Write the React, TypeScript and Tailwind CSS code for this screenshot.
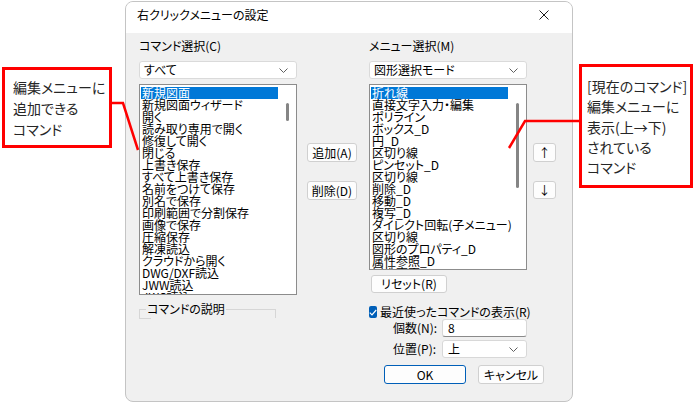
import React from "react";

const leftItems = [
  "新規図面",
  "新規図面ウィザード",
  "開く",
  "読み取り専用で開く",
  "修復して開く",
  "閉じる",
  "上書き保存",
  "すべて上書き保存",
  "名前をつけて保存",
  "別名で保存",
  "印刷範囲で分割保存",
  "画像で保存",
  "圧縮保存",
  "解凍読込",
  "クラウドから開く",
  "DWG/DXF読込",
  "JWW読込",
  "JWC読込",
];

const rightItems = [
  "折れ線",
  "直接文字入力・編集",
  "ポリライン",
  "ボックス_D",
  "円_D",
  "区切り線",
  "ピンセット_D",
  "区切り線",
  "削除_D",
  "移動_D",
  "複写_D",
  "ダイレクト回転(子メニュー)",
  "区切り線",
  "図形のプロパティ_D",
  "属性参照_D",
  "属性変更_D",
];

function Chevron() {
  return (
    <svg width="9" height="5" viewBox="0 0 9 5" fill="none">
      <path d="M0.5 0.5 L4.5 4.5 L8.5 0.5" stroke="#606060" strokeWidth="1" />
    </svg>
  );
}

function Combo({ text }: { text: string }) {
  return (
    <div className="h-[18px] w-[158px] bg-white border border-[#dadada] rounded-[3px] flex items-center justify-between pl-[4px] pr-[8px] text-[12px] leading-[12px]">
      <span>{text}</span>
      <Chevron />
    </div>
  );
}

function ListBox({
  items,
  height,
  thumbTop,
  thumbHeight,
}: {
  items: string[];
  height: string;
  thumbTop: string;
  thumbHeight: string;
}) {
  return (
    <div className={`w-[158px] ${height} bg-white border border-[#8c8c8c] flex overflow-hidden`}>
      <div className="w-[138px] pl-[1px] pt-[2px] flex flex-col">
        {items.map((t, i) => (
          <div
            key={i}
            className={
              i === 0
                ? "h-[12px] leading-[12px] text-[12px] pl-[1px] whitespace-nowrap bg-[#0078d7] text-white"
                : "h-[12px] leading-[12px] text-[12px] pl-[1px] whitespace-nowrap text-black"
            }
          >
            {t}
          </div>
        ))}
      </div>
      <div className="flex-1 flex flex-col items-center">
        <div className={`${thumbTop} ${thumbHeight} w-[3px] rounded-full bg-[#858585]`} />
      </div>
    </div>
  );
}

function Btn({ children, cls }: { children: React.ReactNode; cls: string }) {
  return (
    <div
      className={`${cls} bg-[#fdfdfd] border border-[#d0d0d0] rounded-[3px] flex items-center justify-center text-[12px] leading-[12px] text-black`}
    >
      {children}
    </div>
  );
}

export default function App() {
  return (
    <div className="relative w-[700px] h-[404px] bg-white overflow-hidden font-['Noto_Sans_CJK_JP','Noto_Sans',sans-serif] [font-feature-settings:'palt'] text-black">
      {/* Dialog */}
      <div className="ml-[125px] mt-[1px] w-[448px] h-[401px] rounded-[8px] border border-[#c4c4c4] bg-[#f0f0f0] overflow-hidden flex flex-col">
        {/* Title bar */}
        <div className="h-[31px] bg-white flex items-start justify-between pl-[11px] pr-[23px] pt-[7px]">
          <span className="text-[12px] leading-[12px]">右クリックメニューの設定</span>
          <svg width="10" height="10" viewBox="0 0 10 10" className="mt-[1px]">
            <path d="M0.5 0.5 L9.5 9.5 M9.5 0.5 L0.5 9.5" stroke="#1a1a1a" strokeWidth="1" />
          </svg>
        </div>

        {/* Body */}
        <div className="flex pl-[13px]">
          {/* Left column */}
          <div className="w-[158px] flex flex-col">
            <div className="mt-[7px] h-[12px] leading-[12px] text-[12px]">コマンド選択(C)</div>
            <div className="mt-[9px]">
              <Combo text="すべて" />
            </div>
            <div className="mt-[5px]">
              <ListBox items={leftItems} height="h-[211px]" thumbTop="mt-[18px]" thumbHeight="h-[18px]" />
            </div>
            <div className="mt-[14px] relative w-[137px] h-[9px] border-t border-l border-r border-[#d6d6d6]">
              <div className="absolute left-[6px] top-[-8px] px-[1px] bg-[#f0f0f0] text-[12px] leading-[14px]">
                コマンドの説明
              </div>
              <div className="absolute left-[-1px] bottom-[-1px] w-[12px] border-b border-[#d6d6d6]" />
            </div>
          </div>

          {/* Middle buttons */}
          <div className="ml-[10px] w-[50px] flex flex-col">
            <Btn cls="mt-[110px] h-[19px] w-[50px]">追加(A)</Btn>
            <Btn cls="mt-[19px] h-[19px] w-[50px]">削除(D)</Btn>
          </div>

          {/* Right column */}
          <div className="ml-[12px] w-[158px] flex flex-col">
            <div className="mt-[7px] h-[12px] leading-[12px] text-[12px]">メニュー選択(M)</div>
            <div className="mt-[9px]">
              <Combo text="図形選択モード" />
            </div>
            <div className="mt-[5px]">
              <ListBox items={rightItems} height="h-[186px]" thumbTop="mt-[18px]" thumbHeight="h-[85px]" />
            </div>
            <Btn cls="mt-[5px] ml-[2px] h-[18px] w-[76px]">リセット(R)</Btn>

            <div className="mt-[13px] h-[12px] flex items-center whitespace-nowrap">
              <div className="w-[12px] h-[12px] rounded-[2px] bg-[#005fb8] flex items-center justify-center">
                <svg width="8" height="7" viewBox="0 0 8 7" fill="none">
                  <path d="M0.8 3.6 L3 5.8 L7.2 1" stroke="white" strokeWidth="1.2" />
                </svg>
              </div>
              <span className="ml-[3px] text-[12px] leading-[12px]">最近使ったコマンドの表示(R)</span>
            </div>

            <div className="mt-[1px] h-[18px] flex items-center whitespace-nowrap">
              <span className="pl-[24px] w-[89px] text-[12px] leading-[12px]">個数(N):</span>
              <div className="w-[85px] h-[18px] shrink-0 bg-white border border-[#d8d8d8] border-b-[#8a8a8a] rounded-[3px] flex items-center pl-[5px] text-[12px] leading-[12px]">
                8
              </div>
            </div>

            <div className="mt-[3px] h-[18px] flex items-center whitespace-nowrap">
              <span className="pl-[24px] w-[89px] text-[12px] leading-[12px]">位置(P):</span>
              <div className="w-[85px] h-[18px] shrink-0 bg-white border border-[#d8d8d8] rounded-[3px] flex items-center justify-between pl-[5px] pr-[8px] text-[12px] leading-[12px]">
                <span>上</span>
                <Chevron />
              </div>
            </div>

            <div className="mt-[7px] h-[19px] flex pl-[15px] whitespace-nowrap">
              <div className="w-[82px] h-[19px] shrink-0 bg-[#fdfdfd] border border-[#005fb8] rounded-[3px] flex items-center justify-center text-[12px] leading-[12px]">
                OK
              </div>
              <Btn cls="ml-[12px] w-[66px] h-[19px] shrink-0">キャンセル</Btn>
            </div>
          </div>

          {/* Up/down */}
          <div className="ml-[6px] w-[23px] flex flex-col">
            <Btn cls="mt-[110px] h-[19px] w-[23px]">↑</Btn>
            <Btn cls="mt-[19px] h-[18px] w-[23px]">↓</Btn>
          </div>
        </div>
      </div>

      {/* Left callout */}
      <div className="absolute left-[2px] top-[67px] w-[110px] h-[81px] border-[3px] border-[#ff0000] bg-white pl-[8px] pt-[7px] text-[14px] leading-[21px] text-[#262626]">
        <div>編集メニューに</div>
        <div>追加できる</div>
        <div>コマンド</div>
      </div>

      {/* Right callout */}
      <div className="absolute left-[579px] top-[64px] w-[114px] h-[124px] border-[3px] border-[#ff0000] bg-white pl-[5px] pt-[9px] text-[14px] leading-[20.3px] text-[#262626] whitespace-nowrap">
        <div>[現在のコマンド]</div>
        <div>編集メニューに</div>
        <div>表示(上→下)</div>
        <div>されている</div>
        <div>コマンド</div>
      </div>

      {/* Leader lines */}
      <svg className="absolute left-0 top-0 pointer-events-none" width="700" height="404" viewBox="0 0 700 404" fill="none">
        <polyline points="110,103 123,103 138,150" stroke="#ff0000" strokeWidth="2.5" />
        <polyline points="580,121 525,121 509,148" stroke="#ff0000" strokeWidth="2.5" />
      </svg>
    </div>
  );
}
